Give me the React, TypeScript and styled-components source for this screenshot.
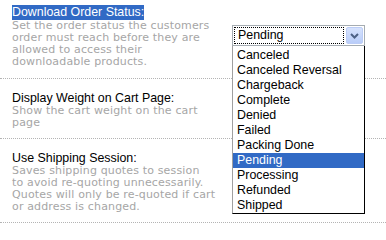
import React from "react";
import styled, { createGlobalStyle } from "styled-components";

interface Setting {
    title: string;
    lines: string[];
    top: number;
    bottom: number;
    highlighted?: boolean;
    withSelect?: boolean;
}

const STATUSES = [
    "Canceled",
    "Canceled Reversal",
    "Chargeback",
    "Complete",
    "Denied",
    "Failed",
    "Packing Done",
    "Pending",
    "Processing",
    "Refunded",
    "Shipped",
];

const SETTINGS: Setting[] = [
    {
        title: "Download Order Status:",
        lines: [
            "Set the order status the customers",
            "order must reach before they are",
            "allowed to access their",
            "downloadable products.",
        ],
        top: 5,
        bottom: 10,
        highlighted: true,
        withSelect: true,
    },
    {
        title: "Display Weight on Cart Page:",
        lines: ["Show the cart weight on the cart", "page"],
        top: 12,
        bottom: 9,
    },
    {
        title: "Use Shipping Session:",
        lines: [
            "Saves shipping quotes to session",
            "to avoid re-quoting unnecessarily.",
            "Quotes will only be re-quoted if cart",
            "or address is changed.",
        ],
        top: 12,
        bottom: 9,
    },
];

const GlobalStyle = createGlobalStyle`
    html, body {
        margin: 0;
        padding: 0;
        background: #ffffff;
    }
`;

const Page = styled.div`
    width: 386px;
    height: 234px;
    overflow: hidden;
    background: #ffffff;
`;

const Row = styled.div<{ $top: number; $bottom: number }>`
    display: flex;
    padding: ${(p) => p.$top}px 0 ${(p) => p.$bottom}px 12px;
    border-bottom: 1px dotted #b4b4b4;
`;

const LabelColumn = styled.div`
    width: 220px;
    flex-shrink: 0;
`;

const Title = styled.div`
    font-family: "Liberation Sans", Arial, sans-serif;
    font-size: 12.4px;
    line-height: 14px;
    color: #000000;
    white-space: nowrap;
`;

const Highlight = styled.span`
    display: inline-block;
    vertical-align: top;
    height: 15px;
    line-height: 15px;
    background: #316ac5;
    color: #ffffff;
`;

const Description = styled.div`
    font-family: "DejaVu Sans", Verdana, sans-serif;
    font-size: 11px;
    line-height: 12px;
    letter-spacing: 0.15px;
    color: #a6a6a6;
    white-space: nowrap;
`;

const SelectColumn = styled.div`
    padding-top: 20px;
`;

const SelectBox = styled.div`
    position: relative;
    display: flex;
    width: 131px;
    height: 19px;
    border: 1px solid #a5acb2;
    background: #ffffff;
`;

const SelectValue = styled.div`
    flex: 1;
    margin: 1px 2px 1px 1px;
    padding-left: 3px;
    border: 1px dotted #000000;
    font-family: "Liberation Sans", Arial, sans-serif;
    font-size: 12.4px;
    line-height: 15px;
    color: #000000;
`;

const ArrowButton = styled.div`
    width: 15px;
    margin: 1px 1px 1px 0;
    border: 1px solid #bccdf6;
    border-radius: 2px;
    background: linear-gradient(#d6e2fd, #b9cdf9);
    display: flex;
    align-items: center;
    justify-content: center;
`;

const OptionList = styled.div`
    position: absolute;
    top: 20px;
    left: -1px;
    width: 131px;
    padding-top: 2px;
    border-left: 1px solid #a0a0a0;
    border-right: 1px solid #000000;
    border-bottom: 1px solid #000000;
    background: #ffffff;
`;

const Option = styled.div<{ $selected: boolean }>`
    height: 15px;
    padding-left: 4px;
    font-family: "Liberation Sans", Arial, sans-serif;
    font-size: 12.4px;
    line-height: 15px;
    white-space: nowrap;
    color: ${(p) => (p.$selected ? "#ffffff" : "#000000")};
    background: ${(p) => (p.$selected ? "#316ac5" : "transparent")};
`;

const Chevron = () => (
    <svg width="9" height="6" viewBox="0 0 9 6">
        <polyline points="1,1 4.5,4.5 8,1" fill="none" stroke="#4d6185" strokeWidth="2" />
    </svg>
);

const StatusSelect = (): JSX.Element => {
    const current = "Pending";
    return (
        <SelectBox>
            <SelectValue>{current}</SelectValue>
            <ArrowButton>
                <Chevron />
            </ArrowButton>
            <OptionList>
                {STATUSES.map((status) => (
                    <Option key={status} $selected={status === current}>
                        {status}
                    </Option>
                ))}
            </OptionList>
        </SelectBox>
    );
};

const App = (): JSX.Element => {
    return (
        <Page>
            <GlobalStyle />
            {SETTINGS.map((setting) => (
                <Row key={setting.title} $top={setting.top} $bottom={setting.bottom}>
                    <LabelColumn>
                        <Title>
                            {setting.highlighted ? <Highlight>{setting.title}</Highlight> : setting.title}
                        </Title>
                        <Description>
                            {setting.lines.map((line) => (
                                <div key={line}>{line}</div>
                            ))}
                        </Description>
                    </LabelColumn>
                    {setting.withSelect && (
                        <SelectColumn>
                            <StatusSelect />
                        </SelectColumn>
                    )}
                </Row>
            ))}
        </Page>
    );
};

export default App;
